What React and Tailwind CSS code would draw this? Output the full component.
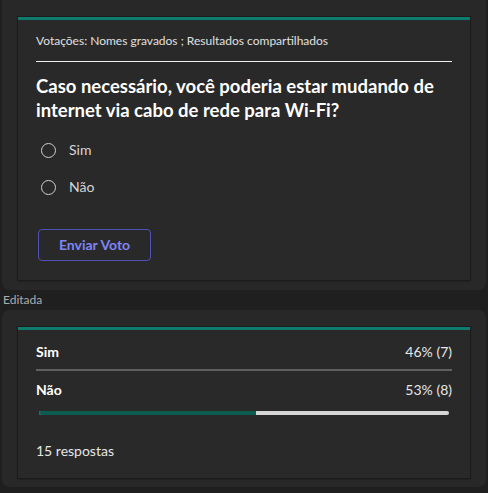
import { useState } from 'react'

const OPTIONS = ['Sim', 'Não']

const RESULTS = [
  { label: 'Sim', pct: 46, votes: 7 },
  { label: 'Não', pct: 53, votes: 8 },
]

function Radio({ label }) {
  return (
    <div className="flex h-5 items-center">
      <span className="ml-[5px] h-[15px] w-[15px] rounded-full border-[1.5px] border-[#d0d0d0]" />
      <span className="ml-[13px] text-sm text-[#d6d6d6]">{label}</span>
    </div>
  )
}

export default function App() {
  const [voted] = useState(false)

  return (
    <div
      className="h-[493px] w-full overflow-hidden bg-[#1f1f1f] text-white"
      style={{ fontFamily: 'Lato, "Noto Sans", sans-serif' }}
    >
      {/* poll card */}
      <div className="mx-[2px] h-[290px] rounded-b-lg bg-[#282828] px-4 pt-[17px]">
        <div className="h-[263px] border-t-[3px] border-[#0f7b6c] bg-[#292929] px-[18px] pt-[13px] shadow-[0_0_0_1px_#1c1c1c,0_1px_2px_#141414]">
          <div className="h-4 text-xs leading-4 text-[#e0e0e0]">
            Votações: Nomes gravados ; Resultados compartilhados
          </div>
          <div className="mt-3 h-px bg-[#f0f0f0]" />
          <h2 className="mt-3 text-[18.5px] font-bold leading-6 text-white">
            Caso necessário, você poderia estar mudando de internet via cabo de rede para Wi-Fi?
          </h2>
          <div className="mt-[18px] flex flex-col gap-[17px]">
            {OPTIONS.map((o) => (
              <Radio key={o} label={o} />
            ))}
          </div>
          <button
            disabled={voted}
            className="ml-[2px] mt-8 h-8 w-[113px] rounded-[4px] border border-[#4f52b2] text-sm font-bold text-[#7f85f5]"
          >
            Enviar Voto
          </button>
        </div>
      </div>

      <div className="flex h-5 items-center pl-[3px] text-xs text-[#adadad]">Editada</div>

      {/* results card */}
      <div className="mx-[2px] h-[177px] rounded-lg bg-[#282828] px-4 pt-[17px]">
        <div className="h-[151px] border-t-[3px] border-[#0f7b6c] bg-[#292929] px-[18px] pt-3 shadow-[0_0_0_1px_#1c1c1c,0_1px_2px_#141414]">
          <div className="flex h-5 items-center justify-between text-sm">
            <span className="font-bold text-white">{RESULTS[0].label}</span>
            <span className="text-[#e6e6e6]">{RESULTS[0].pct}% ({RESULTS[0].votes})</span>
          </div>
          <div className="mt-[7px] h-[2px] bg-[#5f5f5f]" />
          <div className="mt-[9px] flex h-5 items-center justify-between text-sm">
            <span className="font-bold text-white">{RESULTS[1].label}</span>
            <span className="text-[#e6e6e6]">{RESULTS[1].pct}% ({RESULTS[1].votes})</span>
          </div>
          <div className="mx-[3px] mt-[11px] flex h-1 overflow-hidden rounded-full bg-[#d6d6d6]">
            <div className="h-full bg-[#0d5c52]" style={{ width: `${RESULTS[1].pct}%` }} />
          </div>
          <div className="mt-[26px] h-5 text-sm leading-5 text-[#e6e6e6]">15 respostas</div>
        </div>
      </div>
    </div>
  )
}
